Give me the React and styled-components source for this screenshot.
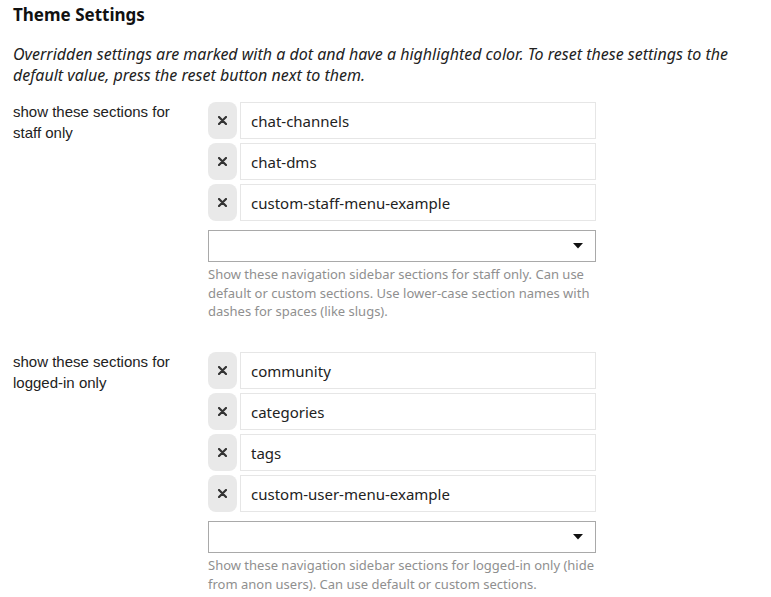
import React from "react";
import styled, { createGlobalStyle } from "styled-components";

const GlobalStyle = createGlobalStyle`
  body {
    margin: 0;
    background: #fff;
    color: #222;
    font-family: "Noto Sans", sans-serif;
  }
`;

const settings = [
  {
    label: "show these sections for staff only",
    values: ["chat-channels", "chat-dms", "custom-staff-menu-example"],
    help:
      "Show these navigation sidebar sections for staff only. Can use default or custom sections. Use lower-case section names with dashes for spaces (like slugs).",
  },
  {
    label: "show these sections for logged-in only",
    values: ["community", "categories", "tags", "custom-user-menu-example"],
    help:
      "Show these navigation sidebar sections for logged-in only (hide from anon users). Can use default or custom sections.",
  },
];

const Page = styled.div`
  padding: 3px 13px 0;
`;

const Title = styled.h2`
  margin: 0;
  font-size: 17px;
  line-height: 24px;
  font-weight: 700;
  color: #111;
`;

const Intro = styled.p`
  margin: 17px 0 16px;
  max-width: 740px;
  font-style: italic;
  font-size: 16px;
  line-height: 21px;
  color: #222;
`;

const Setting = styled.div`
  display: grid;
  grid-template-columns: 195px 388px;
  margin-bottom: 31px;
`;

const Label = styled.div`
  font-family: "Liberation Sans", Arial, sans-serif;
  font-size: 15px;
  line-height: 21px;
  color: #222;
  padding-right: 20px;
  margin-top: -1px;
`;

const Values = styled.div`
  display: flex;
  flex-direction: column;
  gap: 4px;
`;

const ValueRow = styled.div`
  display: flex;
  gap: 3px;
  height: 37px;
`;

const RemoveButton = styled.button`
  width: 29px;
  flex: none;
  border: none;
  border-radius: 8px;
  background: #e9e9e9;
  display: flex;
  align-items: center;
  justify-content: center;
  padding: 0;
`;

const ValueInput = styled.div`
  flex: 1;
  box-sizing: border-box;
  border: 1px solid #e6e6e6;
  display: flex;
  align-items: center;
  padding-left: 10px;
  font-size: 15px;
  color: #222;
`;

const Select = styled.div`
  box-sizing: border-box;
  height: 32px;
  margin-top: 9px;
  border: 1px solid #a9a9a9;
  display: flex;
  align-items: center;
  justify-content: flex-end;
  padding-right: 12px;
`;

const Help = styled.div`
  margin-top: 3px;
  font-size: 13px;
  line-height: 18.7px;
  color: #8f8f8f;
`;

const Cross = () => (
  <svg width="9" height="9" viewBox="0 0 9 9">
    <path d="M1 1L8 8M8 1L1 8" stroke="#333" strokeWidth="2.2" strokeLinecap="round" />
  </svg>
);

const Caret = () => (
  <svg width="10" height="6" viewBox="0 0 10 6">
    <path d="M0 0H10L5 5.5Z" fill="#111" />
  </svg>
);

export default function App() {
  return (
    <Page>
      <GlobalStyle />
      <Title>Theme Settings</Title>
      <Intro>
        Overridden settings are marked with a dot and have a highlighted color. To reset these
        settings to the default value, press the reset button next to them.
      </Intro>
      {settings.map((s) => (
        <Setting key={s.label}>
          <Label>{s.label}</Label>
          <div>
            <Values>
              {s.values.map((v) => (
                <ValueRow key={v}>
                  <RemoveButton>
                    <Cross />
                  </RemoveButton>
                  <ValueInput>{v}</ValueInput>
                </ValueRow>
              ))}
            </Values>
            <Select>
              <Caret />
            </Select>
            <Help>{s.help}</Help>
          </div>
        </Setting>
      ))}
    </Page>
  );
}
